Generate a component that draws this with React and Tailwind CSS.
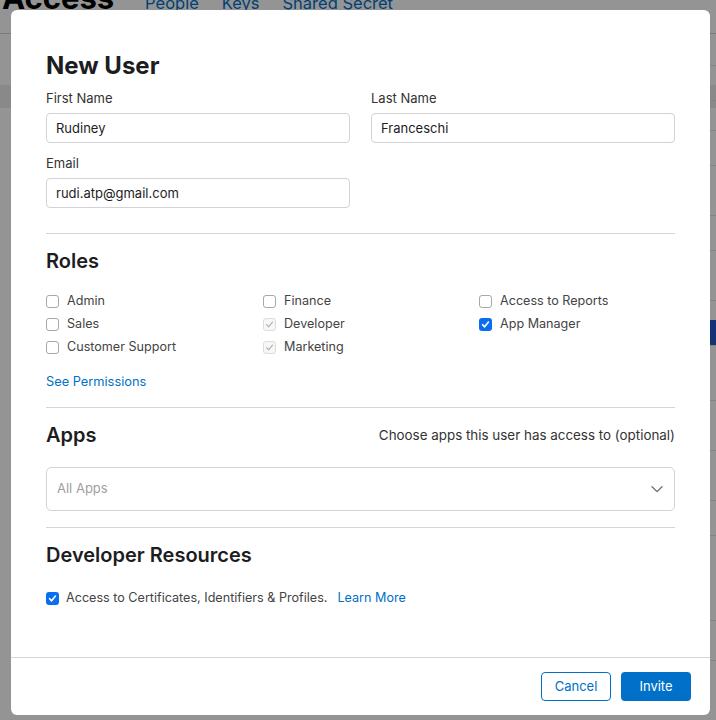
import { useState } from "react";

const font = { fontFamily: "Inter, 'Liberation Sans', sans-serif" };

const bgRows = [65, 100, 130, 165, 215, 250, 300, 345, 400, 450, 500, 535, 620, 660];

const Check = ({ state }) => {
  // state: "off" | "on" | "disabled"
  if (state === "on") {
    return (
      <span className="flex h-[13px] w-[13px] items-center justify-center rounded-[3px] bg-[#0a6ef0]">
        <svg width="9" height="9" viewBox="0 0 10 10" fill="none">
          <path d="M1.8 5.2 4 7.6 8.3 2.3" stroke="white" strokeWidth="1.8" strokeLinecap="round" strokeLinejoin="round" />
        </svg>
      </span>
    );
  }
  if (state === "disabled") {
    return (
      <span className="flex h-[13px] w-[13px] items-center justify-center rounded-[3px] border border-[#dcdcdc] bg-[#f7f7f7]">
        <svg width="9" height="9" viewBox="0 0 10 10" fill="none">
          <path d="M1.8 5.2 4 7.6 8.3 2.3" stroke="#b0b0b0" strokeWidth="1.3" strokeLinecap="round" strokeLinejoin="round" />
        </svg>
      </span>
    );
  }
  return <span className="h-[13px] w-[13px] rounded-[3px] border border-[#a8a8a8] bg-white" />;
};

const roles = [
  [
    ["Admin", "off"],
    ["Sales", "off"],
    ["Customer Support", "off"],
  ],
  [
    ["Finance", "off"],
    ["Developer", "disabled"],
    ["Marketing", "disabled"],
  ],
  [
    ["Access to Reports", "off"],
    ["App Manager", "on"],
  ],
];

const Field = ({ label, value }) => (
  <div className="flex flex-col">
    <label className="text-[13px] leading-4 text-[#333]">{label}</label>
    <input
      defaultValue={value}
      className="mt-[7px] h-[30px] w-full rounded-[4px] border border-[#d2d2d7] px-[9px] text-[13px] text-[#1d1d1f] outline-none"
    />
  </div>
);

export default function App() {
  const [open] = useState(true);

  return (
    <div className="relative h-[720px] w-[716px] overflow-hidden bg-white" style={font}>
      {/* page behind the modal */}
      <div className="flex h-[34px] items-end border-b border-[#cfcfcf] pb-[15px]">
        <h1 className="pl-[2px] text-[31px] font-bold leading-[40px] text-black">Access</h1>
        <div className="ml-[31px] flex gap-[23px] pb-[2px] text-[16.5px] text-[#0070c9]">
          <span>People</span>
          <span>Keys</span>
          <span>Shared Secret</span>
        </div>
      </div>
      <div className="mt-[51px] h-[23px] bg-[#ececec]" />
      {bgRows.map((y) => (
        <div key={y} className="absolute right-0 h-px w-[40px] bg-[#e2e2e2]" style={{ top: y }} />
      ))}
      <div className="absolute right-0 top-[320px] h-[25px] w-[20px] bg-[#2456c9]" />

      {open && (
        <div className="absolute inset-0 bg-black/[0.42]">
          <div className="absolute left-[11px] top-[10px] flex h-[705px] w-[699px] flex-col rounded-[6px] bg-white">
            <div className="flex-1 px-[35px] pt-[42px]">
              <h2 className="text-[24px] font-bold leading-[28px] text-[#1d1d1f]">New User</h2>

              <div className="mt-[10px] grid grid-cols-2 gap-x-[21px]">
                <Field label="First Name" value="Rudiney" />
                <Field label="Last Name" value="Franceschi" />
              </div>
              <div className="mt-[12px] grid grid-cols-2 gap-x-[21px]">
                <Field label="Email" value="rudi.atp@gmail.com" />
              </div>

              <div className="mt-[25px] h-px bg-[#d6d6d6]" />

              <h3 className="mt-[14px] text-[20px] font-semibold leading-[26px] text-[#1d1d1f]">Roles</h3>
              <div className="mt-[16px] grid grid-cols-[217px_216px_1fr]">
                {roles.map((col, i) => (
                  <div key={i} className="flex flex-col">
                    {col.map(([name, st]) => (
                      <div key={name} className="flex h-[23px] items-center gap-[8px]">
                        <Check state={st} />
                        <span className="text-[12.6px] text-[#444]">{name}</span>
                      </div>
                    ))}
                  </div>
                ))}
              </div>
              <a href="#" className="mt-[15px] block text-[12.8px] leading-4 text-[#0070c9]">
                See Permissions
              </a>

              <div className="mt-[17px] h-px bg-[#d6d6d6]" />

              <div className="mt-[14px] flex items-center justify-between">
                <h3 className="text-[20px] font-semibold leading-[26px] text-[#1d1d1f]">Apps</h3>
                <span className="text-[13.4px] text-[#333]">Choose apps this user has access to (optional)</span>
              </div>
              <div className="mt-[19px] flex h-[44px] items-center justify-between rounded-[5px] border border-[#d2d2d7] pl-[10px] pr-[10px]">
                <span className="text-[13px] text-[#a0a0a0]">All Apps</span>
                <svg width="14" height="14" viewBox="0 0 14 14" fill="none">
                  <path d="M2 4.8 7 9.6 12 4.8" stroke="#6e6e73" strokeWidth="1.3" strokeLinecap="round" strokeLinejoin="round" />
                </svg>
              </div>

              <div className="mt-[16px] h-px bg-[#d6d6d6]" />

              <h3 className="mt-[14px] text-[20px] font-semibold leading-[26px] text-[#1d1d1f]">Developer Resources</h3>
              <div className="mt-[22px] flex h-4 items-center gap-[7px]">
                <Check state="on" />
                <span className="text-[12.6px] text-[#444]">Access to Certificates, Identifiers &amp; Profiles.</span>
                <a href="#" className="ml-[3px] text-[12.6px] text-[#0070c9]">
                  Learn More
                </a>
              </div>
            </div>

            <div className="flex h-[58px] items-center justify-end gap-[10px] border-t border-[#d6d6d6] pr-[19px]">
              <button className="h-[29px] w-[70px] rounded-[4px] border border-[#0070c9] bg-white text-[13px] text-[#0070c9]">
                Cancel
              </button>
              <button className="h-[29px] w-[70px] rounded-[4px] bg-[#0070c9] text-[13px] text-white">
                Invite
              </button>
            </div>
          </div>
        </div>
      )}
    </div>
  );
}
